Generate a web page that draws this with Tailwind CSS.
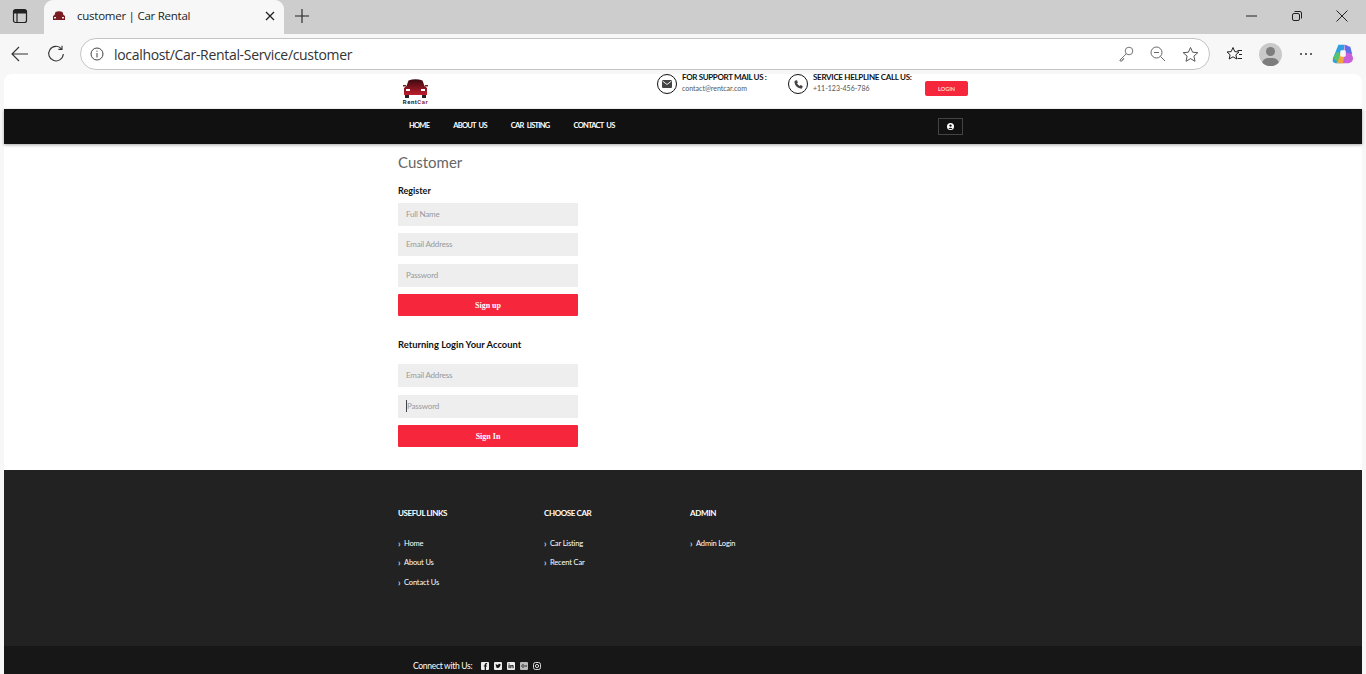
<!DOCTYPE html>
<html lang="en">
<head>
<meta charset="utf-8">
<title>customer | Car Rental</title>
<script src="https://cdn.jsdelivr.net/npm/@tailwindcss/browser@4"></script>
</head>
<body class="m-0 h-[674px] w-[1366px] overflow-hidden bg-[#f7f7f7] font-['Lato',sans-serif]">
<!-- Tab strip -->
<div class="flex h-[34px] items-end bg-[#cdcdcd]">
  <div class="flex h-[34px] w-[40px] items-center justify-center pb-[2px]">
    <svg width="16" height="16" viewBox="0 0 16 16" fill="none" stroke="#222" stroke-width="1.2"><rect x="1.5" y="1.5" width="13" height="13" rx="2"/><path d="M1.5 5H14.5M5 5V14.5"/><rect x="2" y="2" width="12" height="3" fill="#222" stroke="none"/></svg>
  </div>
  <div class="ml-[4px] flex h-[34px] w-[240px] items-center rounded-t-[9px] bg-[#f7f7f7] pb-[2px] pl-[9px] pr-[9px]">
    <svg width="12" height="10" viewBox="0 0 12 10"><path d="M2.5 1 Q6 -0.5 9.5 1 L10.5 4 L12 5 V9 H0 V5 L1.5 4Z" fill="#7a1c24"/><rect x="1" y="6" width="2" height="1.4" fill="#eee"/><rect x="9" y="6" width="2" height="1.4" fill="#eee"/></svg>
    <span class="ml-[12px] font-['Open_Sans',sans-serif] text-[11.5px] tracking-[-0.25px] text-[#222]">customer | Car Rental</span>
    <svg class="ml-auto" width="10" height="10" viewBox="0 0 10 10" stroke="#222" stroke-width="1.3"><path d="M1 1L9 9M9 1L1 9"/></svg>
  </div>
  <div class="flex h-[34px] w-[36px] items-center justify-center pb-[2px]">
    <svg width="14" height="14" viewBox="0 0 14 14" stroke="#222" stroke-width="1.1"><path d="M7 0V14M0 7H14"/></svg>
  </div>
  <div class="ml-auto flex h-[34px] items-center pb-[2px]">
    <div class="flex w-[46px] justify-center"><svg width="11" height="2" stroke="#222"><path d="M0 1H11"/></svg></div>
    <div class="flex w-[46px] justify-center"><svg width="10" height="10" viewBox="0 0 10 10" fill="none" stroke="#222"><rect x="0.5" y="2.5" width="7" height="7" rx="1.5"/><path d="M2.5 .5H8A1.5 1.5 0 0 1 9.5 2V7.5"/></svg></div>
    <div class="flex w-[46px] justify-center pr-[2px]"><svg width="12" height="12" viewBox="0 0 12 12" stroke="#222"><path d="M.5 .5L11.5 11.5M11.5 .5L.5 11.5"/></svg></div>
  </div>
</div>
<!-- Toolbar -->
<div class="flex h-[40px] items-center bg-[#f7f7f7]">
  <div class="flex w-[38px] justify-center pl-[2px]">
    <svg width="18" height="16" viewBox="0 0 18 16" fill="none" stroke="#333" stroke-width="1.1"><path d="M17 8H1M8 1L1 8L8 15"/></svg>
  </div>
  <div class="flex w-[36px] justify-center">
    <svg width="18" height="18" viewBox="0 0 18 18" fill="none" stroke="#333" stroke-width="1.1"><path d="M14.5 3.8A7.3 7.3 0 1 0 16.3 9"/><path d="M15 .8V4.4H11.4"/></svg>
  </div>
  <div class="ml-[6px] flex h-[32px] w-[1130px] items-center rounded-full border border-[#c4c4c4] bg-white pl-[9px] pr-[10px]">
    <svg width="14" height="14" viewBox="0 0 14 14" fill="none" stroke="#444"><circle cx="7" cy="7" r="6"/><path d="M7 6V10.5M7 3.6V4.8"/></svg>
    <span class="ml-[10px] font-['Open_Sans',sans-serif] text-[14px] tracking-[-0.32px] text-[#333]">localhost/Car-Rental-Service/customer</span>
    <div class="ml-auto flex items-center gap-[16px]">
      <svg width="16" height="16" viewBox="0 0 16 16" fill="none" stroke="#777"><circle cx="11" cy="5" r="3.8"/><path d="M8.2 7.8L2 14V15H4.2V13.4H5.6V12"/></svg>
      <svg width="16" height="16" viewBox="0 0 16 16" fill="none" stroke="#666"><circle cx="6.5" cy="6.5" r="5.5"/><path d="M10.5 10.5L15 15M4 6.5H9"/></svg>
      <svg width="17" height="17" viewBox="0 0 17 17" fill="none" stroke="#555"><path d="M8.5 1.5L10.6 6.2L15.8 6.7L11.9 10.1L13 15.3L8.5 12.6L4 15.3L5.1 10.1L1.2 6.7L6.4 6.2Z"/></svg>
    </div>
  </div>
  <div class="ml-[16px] flex items-center">
    <svg width="17" height="17" viewBox="0 0 17 17" fill="none" stroke="#222"><path d="M7 1.5L8.8 5.6L13 6L9.9 8.8L10.8 13L7 10.8L3.2 13L4.1 8.8L1 6L5.2 5.6Z"/><path d="M11.5 4.5H16M13 8.5H16M11.5 12.5H16"/></svg>
    <div class="relative ml-[16px] h-[23px] w-[23px] overflow-hidden rounded-full bg-[#c9c9c9]">
      <div class="absolute left-[7px] top-[4px] h-[9px] w-[9px] rounded-full bg-[#7d7d7d]"></div>
      <div class="absolute left-[3px] top-[15px] h-[12px] w-[17px] rounded-full bg-[#7d7d7d]"></div>
    </div>
    <div class="ml-[18px] flex gap-[3px]"><span class="h-[2px] w-[2px] rounded-full bg-[#333]"></span><span class="h-[2px] w-[2px] rounded-full bg-[#333]"></span><span class="h-[2px] w-[2px] rounded-full bg-[#333]"></span></div>
    <svg class="ml-[20px]" width="22" height="22" viewBox="0 0 24 24"><path d="M7 2H14L10 22H4Q0 22 1 17Z" fill="#2f9fe0"/><path d="M14 2Q18 2 19 6L23 16Q23 21 18 22H10L13 13Z" fill="#c85ed8"/><path d="M5 22L9 11H14L12 22Z" fill="#f0a63a"/><path d="M1 16L6 9L9 12L6 21Z" fill="#57c46a"/><path d="M14 3L20 4L22 12L15 10Z" fill="#5a70e8"/><rect x="9" y="8" width="6" height="7" rx="1.5" fill="#f7f7f7"/></svg>
  </div>
</div>
<!-- Page -->
<div class="mx-[4px] h-[600px] rounded-t-[8px] bg-white">
  <!-- Top header -->
  <header class="flex h-[35px] pl-[394px]">
    <div class="ml-[4px] flex w-[27px] flex-col items-center pt-[5px]">
      <svg width="25" height="19" viewBox="0 0 25 19"><defs><linearGradient id="c" x1="0" y1="0" x2="0" y2="1"><stop offset="0" stop-color="#3a0a10"/><stop offset="1" stop-color="#c01c2c"/></linearGradient></defs><path d="M5.5 1.5Q12.5 -1 19.5 1.5L21.5 7L24 9V16H1V9L3.5 7Z" fill="url(#c)"/><path d="M0 6H3V7.5H0ZM22 6H25V7.5H22Z" fill="#7a1c24"/><rect x="3" y="10" width="4" height="2" fill="#fff"/><rect x="18" y="10" width="4" height="2" fill="#fff"/><rect x="2" y="16" width="4" height="3" fill="#222"/><rect x="19" y="16" width="4" height="3" fill="#222"/></svg>
      <div class="whitespace-nowrap font-['Roboto',sans-serif] text-[6px] font-bold leading-[7px] tracking-[0.5px] text-[#222]">Rent<span class="text-[#8a2a34]">Car</span></div>
    </div>
    <div class="ml-[228px] flex">
      <div class="flex h-[20px] w-[20px] shrink-0 items-center justify-center rounded-full border-[1.5px] border-[#111] bg-white">
        <svg width="10" height="8" viewBox="0 0 10 8"><rect width="10" height="8" rx="1" fill="#444"/><path d="M.5 1L5 4.5L9.5 1" fill="none" stroke="#fff" stroke-width=".9"/></svg>
      </div>
      <div class="ml-[5px] w-[106px]">
        <div class="whitespace-nowrap text-[8px] font-bold leading-[7px] tracking-[-0.35px] text-[#111]">FOR SUPPORT MAIL US :</div>
        <div class="mt-[3px] whitespace-nowrap text-[7px] leading-[8px] text-[#555]">contact@rentcar.com</div>
      </div>
    </div>
    <div class="flex">
      <div class="flex h-[20px] w-[20px] shrink-0 items-center justify-center rounded-full border-[1.5px] border-[#111] bg-white">
        <svg width="9" height="9" viewBox="0 0 9 9"><path d="M1.4 .6L3 .3L3.9 2.4L3 3.2Q3.8 5 5.7 6L6.5 5.1L8.7 6.1L8.3 7.7Q7.8 8.8 6.6 8.6Q1.5 7.5 .4 2.3Q.3 1.2 1.4 .6Z" fill="#444"/></svg>
      </div>
      <div class="ml-[5px] w-[112px]">
        <div class="whitespace-nowrap text-[8px] font-bold leading-[7px] tracking-[-0.3px] text-[#111]">SERVICE HELPLINE CALL US:</div>
        <div class="mt-[3px] whitespace-nowrap text-[7px] leading-[8px] text-[#555]">+11-123-456-786</div>
      </div>
    </div>
    <div class="mt-[7px] flex h-[15px] w-[43px] items-center justify-center rounded-[2px] bg-[#f6263c] pt-[1px] text-[5.5px] font-bold text-[#ffd9dd]">LOGIN</div>
  </header>
  <!-- Nav -->
  <nav class="flex h-[35px] bg-[#111111] pl-[394px] pr-[399px] shadow-[0_1px_3px_rgba(0,0,0,0.35)]">
    <div class="ml-[11px] flex gap-[24px] pt-[11px] text-[7.5px] font-bold leading-[12px] tracking-[-0.75px] text-white [word-spacing:2px]">
      <span>HOME</span><span>ABOUT US</span><span>CAR LISTING</span><span>CONTACT US</span>
    </div>
    <div class="ml-auto mt-[9px] flex h-[17px] w-[25px] items-center justify-center border border-[#444]">
      <svg width="7" height="7" viewBox="0 0 7 7"><circle cx="3.5" cy="3.5" r="3.5" fill="#fff"/><circle cx="3.5" cy="2.6" r="1.2" fill="#111"/><path d="M1.4 6Q3.5 3.6 5.6 6Z" fill="#111"/></svg>
    </div>
  </nav>
  <!-- Main -->
  <main class="h-[326px] pl-[394px]">
    <h1 class="pt-[8px] text-[15px] leading-[20px] text-[#666]">Customer</h1>
    <h2 class="mt-[13px] text-[9px] font-bold leading-[12px] text-[#111]">Register</h2>
    <div class="mt-[6px] flex h-[23px] w-[180px] items-center bg-[#eeeeee] pb-[2px] pl-[8px] text-[8px] tracking-[-0.2px] text-[#999]">Full Name</div>
    <div class="mt-[7px] flex h-[23px] w-[180px] items-center bg-[#eeeeee] pb-[2px] pl-[8px] text-[8px] tracking-[-0.2px] text-[#999]">Email Address</div>
    <div class="mt-[8px] flex h-[23px] w-[180px] items-center bg-[#eeeeee] pb-[2px] pl-[8px] text-[8px] tracking-[-0.2px] text-[#999]">Password</div>
    <div class="mt-[7px] flex h-[22px] w-[180px] items-center justify-center rounded-[1px] bg-[#f6263c] pt-[2px] font-['Liberation_Serif',serif] text-[8px] font-bold text-white">Sign up</div>
    <h2 class="mt-[23px] text-[9.4px] font-bold leading-[12px] text-[#111]">Returning Login Your Account</h2>
    <div class="mt-[13px] flex h-[23px] w-[180px] items-center bg-[#eeeeee] pb-[2px] pl-[8px] text-[8px] tracking-[-0.2px] text-[#999]">Email Address</div>
    <div class="mt-[8px] flex h-[23px] w-[180px] items-center bg-[#eeeeee] pb-[2px] pl-[8px] text-[8px] tracking-[-0.2px] text-[#999]"><span class="border-l border-[#444]">Password</span></div>
    <div class="mt-[7px] flex h-[22px] w-[180px] items-center justify-center rounded-[1px] bg-[#f6263c] pt-[2px] font-['Liberation_Serif',serif] text-[8px] font-bold text-white">Sign In</div>
  </main>
  <!-- Footer -->
  <footer class="flex h-[176px] bg-[#222222] pl-[394px] pt-[37px] text-white">
    <div class="w-[146px]">
      <div class="text-[8px] font-bold leading-[12px] tracking-[-0.4px]">USEFUL LINKS</div>
      <ul class="mt-[19px] text-[7.5px] leading-[12px] tracking-[-0.15px]">
        <li class="flex h-[19px]"><span class="w-[6px] text-[9px] leading-[11px]">›</span>Home</li><li class="flex h-[20px]"><span class="w-[6px] text-[9px] leading-[11px]">›</span>About Us</li><li class="flex"><span class="w-[6px] text-[9px] leading-[11px]">›</span>Contact Us</li>
      </ul>
    </div>
    <div class="w-[146px]">
      <div class="text-[8px] font-bold leading-[12px] tracking-[-0.4px]">CHOOSE CAR</div>
      <ul class="mt-[19px] text-[7.5px] leading-[12px] tracking-[-0.15px]">
        <li class="flex h-[19px]"><span class="w-[6px] text-[9px] leading-[11px]">›</span>Car Listing</li><li class="flex"><span class="w-[6px] text-[9px] leading-[11px]">›</span>Recent Car</li>
      </ul>
    </div>
    <div>
      <div class="text-[8px] font-bold leading-[12px] tracking-[-0.3px]">ADMIN</div>
      <ul class="mt-[19px] text-[7.5px] leading-[12px] tracking-[-0.15px]">
        <li class="flex"><span class="w-[6px] text-[9px] leading-[11px]">›</span>Admin Login</li>
      </ul>
    </div>
  </footer>
  <div class="flex h-[28px] items-start bg-[#171717] pl-[409px] pt-[14px] text-white">
    <span class="text-[8.5px] leading-[12px] tracking-[-0.3px]">Connect with Us:</span>
    <div class="ml-[9px] mt-[2px] flex gap-[5px]">
      <svg width="8" height="8" viewBox="0 0 8 8"><rect width="8" height="8" rx="1" fill="#eee"/><path d="M5 8V4.6H6V3.4H5V2.7Q5 2.2 5.5 2.2H6.1V1H5.2Q3.7 1 3.7 2.6V3.4H2.8V4.6H3.7V8Z" fill="#171717"/></svg>
      <svg width="8" height="8" viewBox="0 0 8 8"><rect width="8" height="8" rx="1" fill="#eee"/><path d="M1.5 5.6Q4.5 6.8 6 4.4Q6.6 3.3 6.5 2.6L6.9 2L6.2 2.2Q5.6 1.5 4.6 2Q4 2.4 4.2 3Q2.8 3 1.8 2Q1.4 3 2.2 3.8L1.7 3.7Q1.9 4.4 2.6 4.7H2.1Q2.4 5.2 3 5.2Q2.4 5.6 1.5 5.6Z" fill="#171717"/></svg>
      <svg width="8" height="8" viewBox="0 0 8 8"><rect width="8" height="8" rx="1" fill="#eee"/><path d="M1.5 3H2.6V6.3H1.5ZM1.5 1.6H2.6V2.5H1.5ZM3.3 3H4.3V3.5Q5.6 2.4 6.6 3.6V6.3H5.5V4.3Q5 3.5 4.4 4.3V6.3H3.3Z" fill="#171717"/></svg>
      <svg width="8" height="8" viewBox="0 0 8 8"><rect width="8" height="8" rx="1" fill="#bbb"/><circle cx="3" cy="4" r="1.3" fill="none" stroke="#171717" stroke-width=".7"/><path d="M5.2 4H7M6.1 3.1V4.9" stroke="#171717" stroke-width=".6"/></svg>
      <svg width="8" height="8" viewBox="0 0 8 8" fill="none" stroke="#eee" stroke-width=".9"><rect x=".5" y=".5" width="7" height="7" rx="2"/><circle cx="4" cy="4" r="1.6"/></svg>
    </div>
  </div>
</div>
</body>
</html>
